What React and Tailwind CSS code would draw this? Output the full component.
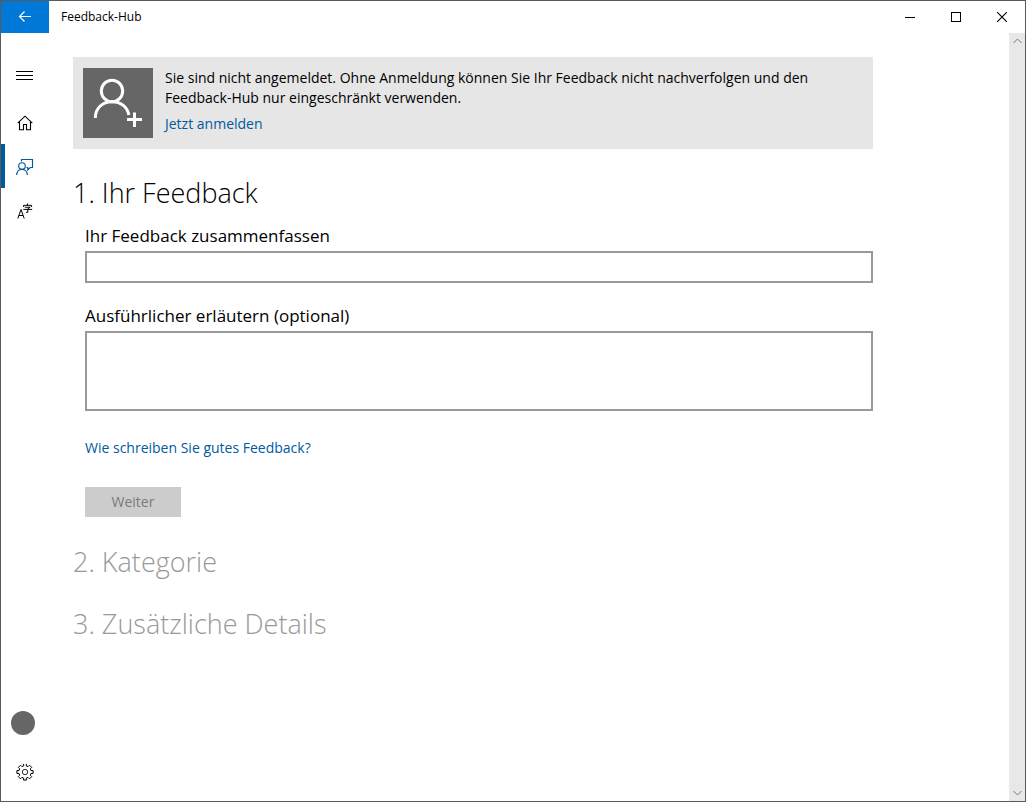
import React from "react";

function NavButton({ label, active, children }) {
  return (
    <button
      type="button"
      aria-label={label}
      aria-current={active ? "page" : undefined}
      className={
        active
          ? "flex h-11 w-full items-center justify-center border-l-4 border-[#005a9e] pt-px pr-1 text-[#005a9e]"
          : "flex h-11 w-full items-center justify-center pt-px pr-px text-black"
      }
    >
      {children}
    </button>
  );
}

function TitleBar() {
  return (
    <header className="flex h-8 items-center">
      <button type="button" aria-label="Zurück" className="flex h-8 w-12 items-center justify-center bg-[#0078d7] text-white">
        <svg width="14" height="12" viewBox="0 0 14 12" fill="none" stroke="currentColor" strokeWidth="1.2">
          <path d="M13 5.500H1.500M6.500 .5L1.500 5.500l5 5" />
        </svg>
      </button>
      <span className="flex-1 pl-3 text-xs">Feedback-Hub</span>
      <button type="button" aria-label="Minimieren" className="flex h-8 w-[46px] items-center justify-center">
        <svg width="10" height="10" viewBox="0 0 10 10" shapeRendering="crispEdges">
          <path d="M0 5h10v1H0z" />
        </svg>
      </button>
      <button type="button" aria-label="Maximieren" className="flex h-8 w-[46px] items-center justify-center">
        <svg width="10" height="10" viewBox="0 0 10 10" fill="none" stroke="black" shapeRendering="crispEdges">
          <path d="M.5 .5h9v9h-9z" />
        </svg>
      </button>
      <button type="button" aria-label="Schließen" className="flex h-8 w-[46px] items-center justify-center">
        <svg width="10" height="10" viewBox="0 0 10 10" fill="none" stroke="black" strokeWidth="1.1">
          <path d="M0 0l10 10M10 0L0 10" />
        </svg>
      </button>
    </header>
  );
}

function Sidebar() {
  return (
    <nav className="flex w-12 shrink-0 flex-col pt-5 pb-2" aria-label="Navigation">
      <div className="pb-[3px]">
        <NavButton label="Menü">
          <svg width="17" height="9" viewBox="0 0 17 9" shapeRendering="crispEdges">
            <path d="M0 0h17v1H0zM0 4h17v1H0zM0 8h17v1H0z" />
          </svg>
        </NavButton>
      </div>
      <NavButton label="Startseite">
        <svg width="16" height="16" viewBox="0 0 16 16" fill="none" stroke="currentColor" strokeWidth="1.1">
          <path d="M.7 8.200L8 1.200l7.300 7" />
          <path d="M2.500 6.800v8h4V9.500h3v5.300h4v-8" />
        </svg>
      </NavButton>
      <NavButton label="Feedback" active>
        <svg width="18" height="18" viewBox="0 0 18 18" fill="none" stroke="currentColor" strokeWidth="1.15">
          <path d="M5.500 3.500V1.500h11v8h-2.200L11.700 12V9.500h-1.200" />
          <circle cx="6" cy="8" r="3.300" />
          <path d="M.7 17c0-3.400 2.200-5.700 5.300-5.700s5.300 2.300 5.300 5.700" />
        </svg>
      </NavButton>
      <NavButton label="Sprache">
        <svg width="16" height="16" viewBox="0 0 16 16" fill="none" stroke="currentColor" strokeWidth="1">
          <path d="M.8 15.500L4 6.500l3.200 9M2 12.500h4" />
          <path d="M6.600 4V2.300h8V4M10.500.5v1.800M7.800 4.200h5.400L10.800 5.800v3.500H9M6.300 6.400h8.900" />
        </svg>
      </NavButton>
      <div className="flex-1" />
      <button type="button" aria-label="Konto" className="flex h-11 w-full items-center pl-[10px]">
        <span className="size-6 rounded-full bg-[#666]" />
      </button>
      <div className="pt-1">
        <NavButton label="Einstellungen">
          <svg width="18" height="18" viewBox="0 0 18 18" fill="none" stroke="currentColor" strokeWidth="1">
            <path d="M7.600 .9L7.700 2.900L5.900 3.600L4.500 2.200L2.300 4.400L3.700 5.800L3 7.600H.9V10.400H3L3.700 12.200L2.300 13.600L4.500 15.800L5.900 14.400L7.700 15.100L7.600 17.100H10.400L10.300 15.100L12.100 14.400L13.500 15.800L15.700 13.600L14.300 12.200L15 10.400H17.100V7.600H15L14.300 5.800L15.700 4.400L13.500 2.200L12.100 3.600L10.300 2.900L10.400 .9" />
            <circle cx="9" cy="9" r="2.700" strokeWidth=".8" />
          </svg>
        </NavButton>
      </div>
    </nav>
  );
}

function SignInBanner() {
  return (
    <section className="flex gap-3 bg-[#e6e6e6] px-[10px] py-[11px]">
      <div className="size-[70px] shrink-0 bg-[#666]">
        <svg width="70" height="70" viewBox="0 0 70 70" fill="none" stroke="white" strokeWidth="3">
          <circle cx="29" cy="23" r="10.700" />
          <path d="M12.300 50c0-9.500 7-16.300 16.700-16.300 9 0 15.500 5.500 16.800 13.300" />
          <path d="M51.500 44.500v14.500M44 51.500h15" />
        </svg>
      </div>
      <div className="text-sm">
        <p>
          Sie sind nicht angemeldet. Ohne Anmeldung können Sie Ihr Feedback nicht nachverfolgen und den Feedback-Hub nur eingeschränkt verwenden.
        </p>
        <a href="#anmelden" className="mt-[6px] block text-[#005a9e]">Jetzt anmelden</a>
      </div>
    </section>
  );
}

export default function App() {
  return (
    <div className="flex min-h-screen flex-col border border-[#5a5a5a] bg-white font-['Open_Sans','Noto_Sans',sans-serif] text-black">
      <TitleBar />
      <div className="flex flex-1">
        <Sidebar />
        <main className="min-w-0 flex-1 px-6 pt-6">
          <div className="max-w-[800px]">
            <SignInBanner />
            <h1 className="mt-6 text-[27px] leading-10 font-light">1. Ihr Feedback</h1>
            <form className="pl-3" onSubmit={(e) => e.preventDefault()}>
              <label htmlFor="summary" className="mt-[11px] block text-[17px] leading-6">Ihr Feedback zusammenfassen</label>
              <input id="summary" type="text" className="mt-[3px] block h-8 w-full border-2 border-[#999] bg-white px-2 outline-none" />
              <label htmlFor="details" className="mt-[21px] block text-[17px] leading-6">Ausführlicher erläutern (optional)</label>
              <textarea id="details" className="mt-[3px] block h-20 w-full resize-none border-2 border-[#999] bg-white px-2 outline-none" />
              <a href="#hilfe" className="mt-[27px] block w-fit text-sm text-[#005a9e]">Wie schreiben Sie gutes Feedback?</a>
              <button type="submit" disabled className="mt-[29px] block h-[30px] w-24 bg-[#ccc] text-sm text-[#7a7a7a]">Weiter</button>
            </form>
            <h2 className="mt-[25px] text-[27px] leading-10 font-light text-[#999]">2. Kategorie</h2>
            <h2 className="mt-[22px] text-[27px] leading-10 font-light text-[#999]">3. Zusätzliche Details</h2>
          </div>
        </main>
        <div className="flex w-4 shrink-0 flex-col justify-between bg-[#e8e8e8] text-[#777]">
          <button type="button" aria-label="Nach oben" className="flex h-4 items-center justify-center">
            <svg width="9" height="6" viewBox="0 0 9 6" fill="none" stroke="currentColor">
              <path d="M.5 5l4-4 4 4" />
            </svg>
          </button>
          <button type="button" aria-label="Nach unten" className="flex h-4 items-center justify-center">
            <svg width="9" height="6" viewBox="0 0 9 6" fill="none" stroke="currentColor">
              <path d="M.5 1l4 4 4-4" />
            </svg>
          </button>
        </div>
      </div>
    </div>
  );
}
